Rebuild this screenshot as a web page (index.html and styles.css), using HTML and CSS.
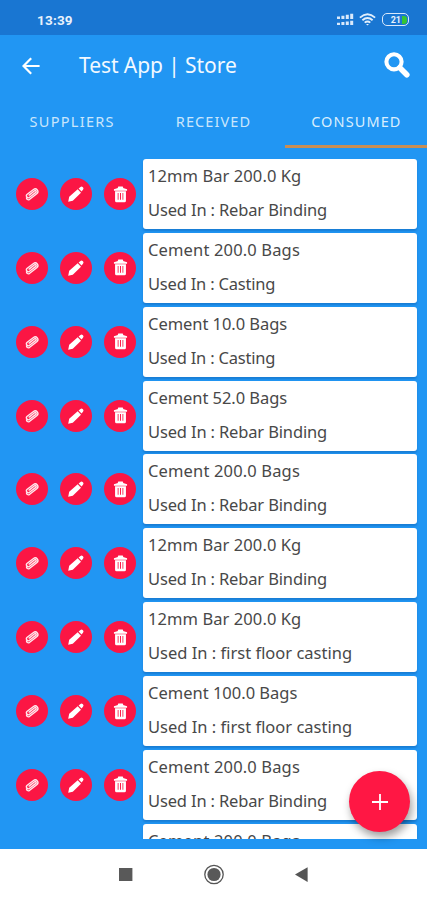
FILE: index.html
```html
<!DOCTYPE html>
<html lang="en">
<head>
<meta charset="utf-8">
<title>Test App | Store</title>
<link rel="stylesheet" href="styles.css">
</head>
<body>
<svg class="defs" width="0" height="0">
  <symbol id="clip" viewBox="0 0 16 16"><g fill="none" stroke="currentColor" stroke-width="1.35" stroke-linecap="round" transform="rotate(-38 8 8)"><path d="M2.2 10.7H12a2.7 2.7 0 0 0 0-5.4H4a1.9 1.9 0 0 0 0 3.8h8a1 1 0 0 0 0-2H5M2.2 10.7a2 2 0 0 1-1-3"/></g></symbol>
  <symbol id="pencil" viewBox="0 0 16 16"><path fill="currentColor" d="M.2 15.8l1-5 8.5-7.5 3.3 3.4-8.2 8zM10.6 2.6l1.9-1.7q1.1-.9 2.1.2l.5.5q.9 1.1-.1 2.1l-1.5 1.9z"/></symbol>
  <symbol id="trash" viewBox="0 0 16 18"><path fill="currentColor" fill-rule="evenodd" d="M5.2 2V1.2Q5.2.4 6 .4h4q.8 0 .8.8V2L15 3.5V5H1V3.5zM2.2 5.6h11.6v10q0 1.6-1.6 1.6H3.8q-1.6 0-1.6-1.6zM5 7.5v7.2h.9V7.5zm2.5 0v7.2h1V7.5zm2.6 0v7.2h.9V7.5z"/></symbol>
</svg>
<header class="status">
  <span class="time">13:39</span>
  <svg class="signal" width="17" height="13" viewBox="0 0 17 13" fill="#d9e9fb"><path d="M0 3.6h3V6H0zM4.4 2.8h3V6h-3zM8.8 1.8h3V6h-3zM13.2.8h3V6h-3zM0 9.8h3V12H0zM4.4 9h3v3h-3zM8.8 8.4h3V12h-3zM13.2 7.8h3V12h-3z"/></svg>
  <svg class="wifi" width="17" height="13" viewBox="0 0 17 13" fill="none" stroke="#e2effc" stroke-width="1.9"><path d="M.9 4.6Q8.5-2 16.1 4.6M3.4 7.2q5.1-4.4 10.2 0M5.7 9.6q2.8-2.4 5.6 0"/><path d="M7 11l1.5 1.6L10 11z" fill="#e2effc" stroke="none"/></svg>
  <span class="battery">21<i></i></span>
</header>
<div class="bar">
  <svg class="back" width="18" height="18" viewBox="0 0 18 18" fill="none" stroke="#fff" stroke-width="2.2"><path d="M17.6 9H1.8M9.2 1.2L1.5 9l7.7 7.8"/></svg>
  <h1>Test App | Store</h1>
  <svg class="search" width="26" height="26" viewBox="0 0 26 26" fill="none" stroke="#fff"><circle cx="10" cy="9.8" r="7.6" stroke-width="4.1"/><path d="M15.8 15.8l7 6.9" stroke-width="5.6" stroke-linecap="round"/></svg>
</div>
<nav class="tabs">
  <span class="tab sup">SUPPLIERS</span>
  <span class="tab rec">RECEIVED</span>
  <span class="tab con active">CONSUMED</span>
</nav>
<main class="list">
  <div class="row"><div class="acts"><b><svg class="ic"><use href="#clip"/></svg></b><b><svg class="ic pen"><use href="#pencil"/></svg></b><b><svg class="ic bin"><use href="#trash"/></svg></b></div><div class="card"><p class="bar12">12mm Bar 200.0 Kg</p><p class="rebar">Used In : Rebar Binding</p></div></div>
  <div class="row"><div class="acts"><b><svg class="ic"><use href="#clip"/></svg></b><b><svg class="ic pen"><use href="#pencil"/></svg></b><b><svg class="ic bin"><use href="#trash"/></svg></b></div><div class="card"><p class="cem">Cement 200.0 Bags</p><p class="casting">Used In : Casting</p></div></div>
  <div class="row"><div class="acts"><b><svg class="ic"><use href="#clip"/></svg></b><b><svg class="ic pen"><use href="#pencil"/></svg></b><b><svg class="ic bin"><use href="#trash"/></svg></b></div><div class="card"><p class="short">Cement 10.0 Bags</p><p class="casting">Used In : Casting</p></div></div>
  <div class="row"><div class="acts"><b><svg class="ic"><use href="#clip"/></svg></b><b><svg class="ic pen"><use href="#pencil"/></svg></b><b><svg class="ic bin"><use href="#trash"/></svg></b></div><div class="card"><p class="short">Cement 52.0 Bags</p><p class="rebar">Used In : Rebar Binding</p></div></div>
  <div class="row"><div class="acts"><b><svg class="ic"><use href="#clip"/></svg></b><b><svg class="ic pen"><use href="#pencil"/></svg></b><b><svg class="ic bin"><use href="#trash"/></svg></b></div><div class="card"><p class="cem">Cement 200.0 Bags</p><p class="rebar">Used In : Rebar Binding</p></div></div>
  <div class="row"><div class="acts"><b><svg class="ic"><use href="#clip"/></svg></b><b><svg class="ic pen"><use href="#pencil"/></svg></b><b><svg class="ic bin"><use href="#trash"/></svg></b></div><div class="card"><p class="bar12">12mm Bar 200.0 Kg</p><p class="rebar">Used In : Rebar Binding</p></div></div>
  <div class="row"><div class="acts"><b><svg class="ic"><use href="#clip"/></svg></b><b><svg class="ic pen"><use href="#pencil"/></svg></b><b><svg class="ic bin"><use href="#trash"/></svg></b></div><div class="card"><p class="bar12">12mm Bar 200.0 Kg</p><p class="floor">Used In : first floor casting</p></div></div>
  <div class="row"><div class="acts"><b><svg class="ic"><use href="#clip"/></svg></b><b><svg class="ic pen"><use href="#pencil"/></svg></b><b><svg class="ic bin"><use href="#trash"/></svg></b></div><div class="card"><p class="hundred">Cement 100.0 Bags</p><p class="floor">Used In : first floor casting</p></div></div>
  <div class="row"><div class="acts"><b><svg class="ic"><use href="#clip"/></svg></b><b><svg class="ic pen"><use href="#pencil"/></svg></b><b><svg class="ic bin"><use href="#trash"/></svg></b></div><div class="card"><p class="cem">Cement 200.0 Bags</p><p class="rebar">Used In : Rebar Binding</p></div></div>
  <div class="row"><div class="acts"></div><div class="card"><p class="cem">Cement 200.0 Bags</p></div></div>
</main>
<div class="fab"><svg width="16" height="16" viewBox="0 0 16 16" stroke="#fff" stroke-width="1.8"><path d="M8 0v16M0 8h16"/></svg></div>
<footer class="nav">
  <svg width="427" height="50" viewBox="0 0 427 50"><rect x="119" y="19" width="13.4" height="13" fill="#595959"/><circle cx="214" cy="25.5" r="9.2" fill="none" stroke="#555" stroke-width="1.3"/><circle cx="214" cy="25.5" r="6.6" fill="#595959"/><path d="M295 25.5l12.6-7.2v14.6z" fill="#555"/></svg>
</footer>
</body>
</html>
```
FILE: styles.css
```css
* { box-sizing: border-box; }
body {
  margin: 0;
  width: 427px;
  height: 900px;
  overflow: hidden;
  display: flex;
  flex-direction: column;
  background: #2196f3;
  font-family: "Noto Sans", sans-serif;
}
.defs { position: absolute; }
.status {
  height: 35px;
  flex: none;
  background: #1976d2;
  display: flex;
  align-items: center;
  padding: 4px 18px 0 37px;
  color: #e8f2fc;
}
.time { flex: 1; font: 700 13.5px Roboto, sans-serif; letter-spacing: .2px; }
.wifi { margin: 0 6px 0 5px; }
.battery {
  display: flex;
  align-items: center;
  justify-content: flex-end;
  width: 27px;
  height: 13px;
  border: 1.5px solid #d9e9fb;
  border-radius: 5px;
  font: 700 9px Roboto, sans-serif;
  padding-right: 1px;
}
.battery i { width: 5px; height: 8px; margin-left: 1px; border-radius: 0 3px 3px 0; background: #35c434; }
.bar { height: 61px; flex: none; display: flex; align-items: center; padding: 0 17px 0 22px; }
h1 { flex: 1; margin: -2px 0 0 39px; font-weight: 400; font-size: 21px; line-height: 30px; color: #f2f9ff; letter-spacing: -.07px; }
.search { margin-top: -1px; }
.tabs { height: 52px; flex: none; display: grid; grid-template-columns: 1fr 1fr 1fr; }
.tab {
  padding-top: 14px;
  text-align: center;
  font-size: 14.5px;
  line-height: 22px;
  color: #cae6fc;
  letter-spacing: 1.1px;
}
.sup { letter-spacing: 1.3px; padding-left: 2px; }
.con { padding-left: 1px; }
.active { color: #d9eefe; border-bottom: 3px solid #c98e54; }
.list { height: 691px; flex: none; overflow: hidden; padding: 11px 10px 0 16px; }
.row { display: flex; height: 73.87px; }
.acts { width: 127px; height: 70px; display: flex; align-items: center; gap: 12px; }
.acts b {
  width: 32px;
  height: 32px;
  border-radius: 50%;
  background: #fb1644;
  display: flex;
  align-items: center;
  justify-content: center;
  color: #ffe9ee;
}
.ic { width: 16px; height: 16px; }
.pen { color: #fff; }
.bin { width: 15px; height: 17px; color: #fff; }
.card {
  width: 274px;
  height: 70px;
  background: #fff;
  border-radius: 3px;
  padding: 0 5px;
  box-shadow: 0 2px 2px rgba(5, 70, 145, .3);
}
.card p { margin: 0; height: 34px; line-height: 33.6px; font-size: 16.5px; color: #484848; white-space: nowrap; }
.card .bar12 { letter-spacing: .08px; }
.card .cem { letter-spacing: .15px; }
.card .short { letter-spacing: -.05px; }
.card .rebar { letter-spacing: -.15px; }
.card .casting { letter-spacing: -.2px; }
.fab {
  position: absolute;
  left: 349px;
  top: 771px;
  width: 61px;
  height: 61px;
  border-radius: 50%;
  background: #ff1744;
  display: flex;
  align-items: center;
  justify-content: center;
  box-shadow: 2px 5px 8px rgba(0, 0, 0, .38);
}
.nav { height: 51px; flex: none; margin-top: 10px; background: #fff; }
.nav svg { display: block; }
```
